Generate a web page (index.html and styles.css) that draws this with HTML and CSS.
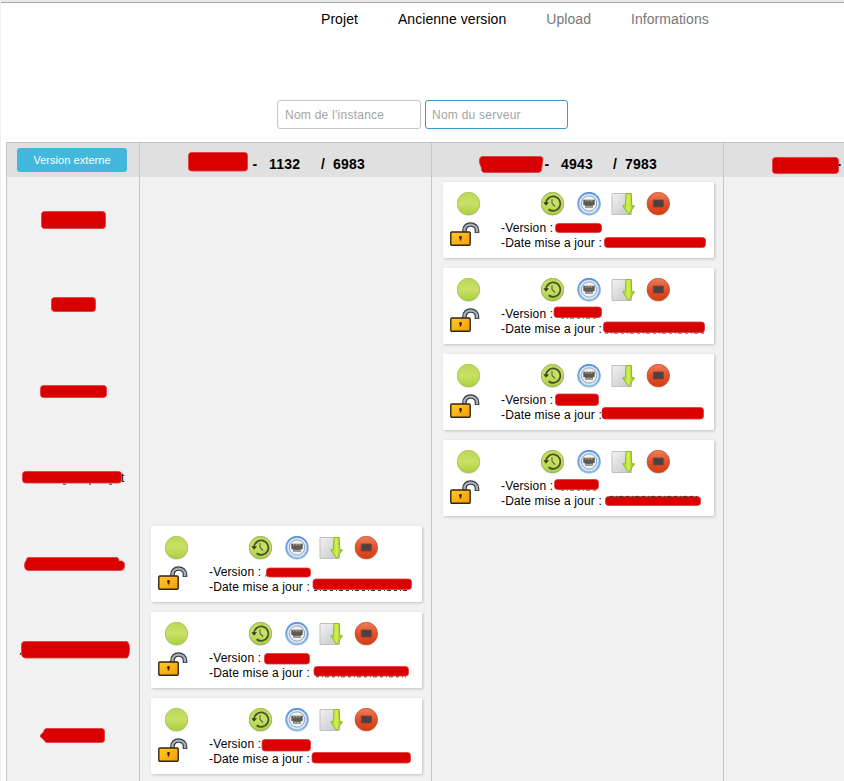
FILE: index.html
```html
<!DOCTYPE html>
<html lang="fr">
<head>
<meta charset="utf-8">
<title>Instances</title>
<link rel="stylesheet" href="styles.css">
</head>
<body>
<svg class="defs" width="0" height="0">
  <defs>
    <linearGradient id="green" x2="0" y2="1"><stop offset="0" stop-color="#b9d957"/><stop offset=".5" stop-color="#cae067"/><stop offset="1" stop-color="#a9d03c"/></linearGradient>
    <linearGradient id="red" x2="0" y2="1"><stop offset="0" stop-color="#ec805a"/><stop offset=".5" stop-color="#e0522c"/><stop offset="1" stop-color="#d53c12"/></linearGradient>
    <linearGradient id="blue" x2="0" y2="1"><stop offset="0" stop-color="#5c94dc"/><stop offset="1" stop-color="#86b9ef"/></linearGradient>
    <linearGradient id="paper" x2="1" y2="1"><stop offset="0" stop-color="#f2f2f2"/><stop offset="1" stop-color="#c5c5c5"/></linearGradient>
    <linearGradient id="arrow" x2="1" y2="0"><stop offset="0" stop-color="#a4d41b"/><stop offset=".5" stop-color="#d2f052"/><stop offset="1" stop-color="#87bd15"/></linearGradient>
    <linearGradient id="gold" x2="1" y2="1"><stop offset="0" stop-color="#ffcc25"/><stop offset="1" stop-color="#f79b05"/></linearGradient>
    <symbol id="status" viewBox="0 0 24 24">
      <ellipse cx="11.500" cy="12.800" rx="11.500" ry="11" fill="#d5d9cb"/>
      <circle cx="11.500" cy="11.500" r="11.200" fill="url(#green)" stroke="#a3c254" stroke-width=".8"/>
    </symbol>
    <symbol id="history" viewBox="0 0 24 24">
      <ellipse cx="11.500" cy="12.800" rx="11.500" ry="11" fill="#d5d9cb"/>
      <circle cx="11.500" cy="11.500" r="11.200" fill="url(#green)" stroke="#8fa858" stroke-width=".8"/>
      <path d="M5 11.200A7.200 7.200 0 1 1 7.600 17.200" fill="none" stroke="#46502a" stroke-width="1.800"/>
      <path d="M2.300 10.200h5.800l-3.100 3.600z" fill="#384021"/>
      <path d="M11 7.200v4.300l3 3" fill="none" stroke="#59663a" stroke-width="1.100"/>
    </symbol>
    <symbol id="network" viewBox="0 0 24 24">
      <ellipse cx="12" cy="12.800" rx="11.800" ry="11" fill="#d3d8df"/>
      <circle cx="12" cy="11.500" r="10.700" fill="#dceafa" stroke="url(#blue)" stroke-width="1.900"/>
      <circle cx="12" cy="11.500" r="7.700" fill="#eef0f2" stroke="#8f9ba9" stroke-width=".9"/>
      <path d="M6.300 7.700h11.400v5l-2 .8v2.300H8.300v-2.300l-2-.8z" fill="#5b5a54"/>
      <path d="M8 8.800h8" stroke="#b5a984" stroke-width="1.200" stroke-dasharray="1 .5"/>
      <path d="M8.500 13.800h7v2h-7z" fill="#a2a29c"/>
    </symbol>
    <symbol id="download" viewBox="0 0 24 24">
      <path d="M1 1.500h19.500v21H1z" fill="url(#paper)" stroke="#c0c0c0"/>
      <path d="M15 1.500h5l.9 12.200h2.600l-5.800 8.900-6-8.900h2.600z" fill="url(#arrow)" stroke="#83ad22" stroke-width=".8"/>
    </symbol>
    <symbol id="stop" viewBox="0 0 24 24">
      <ellipse cx="12.300" cy="12.800" rx="11.500" ry="11" fill="#ddd2cd"/>
      <circle cx="12.300" cy="11.500" r="11.200" fill="url(#red)" stroke="#ca4b2b" stroke-width=".8"/>
      <path d="M7.300 8h10v7h-10z" fill="#4b4142" stroke="#8c4030" stroke-width=".8"/>
    </symbol>
    <symbol id="unlock" viewBox="0 0 30 25">
      <path d="M14.500 11V8.500C14.500 4.400 17.300 2.500 20.500 2.500S27 4.700 27 8.500V11" fill="none" stroke="#343a40" stroke-width="4.600"/>
      <path d="M14.500 10.200V8.500C14.500 4.500 17.300 2.700 20.500 2.700S27 4.700 27 8.500V10.200" fill="none" stroke="#a9b0b8" stroke-width="2.300"/>
      <rect x=".8" y="10" width="19.400" height="13.300" rx="1" fill="url(#gold)" stroke="#30261a" stroke-width="1.400"/>
      <path d="M10.500 14.500v4" stroke="#3c2608" stroke-width="1.500"/><circle cx="10.500" cy="15.500" r="1.400" fill="#3c2608"/>
    </symbol>
  </defs>
</svg>

<nav class="nav">
  <a class="on">Projet</a><a class="on">Ancienne version</a><a>Upload</a><a>Informations</a>
</nav>

<form class="search">
  <input type="text" placeholder="Nom de l'instance">
  <input type="text" class="active" placeholder="Nom du serveur">
</form>

<main class="board">
  <div class="row head">
    <div class="cell label"><button type="button" class="btn">Version externe</button></div>
    <div class="cell server"><span class="dash">-</span><b class="port">1132</b><b class="sep">/</b><b>6983</b>
      <svg class="marks"><rect x="48.500" y="9.500" width="59" height="18.500" rx="3"/></svg></div>
    <div class="cell server"><span class="dash">-</span><b class="port">4943</b><b class="sep">/</b><b>7983</b>
      <svg class="marks"><path d="M50 13.500H108.500Q111 14 111 16L109.500 27Q109 29.500 106 29.500H52Q49 29 49.500 25L47.500 20V16Q48 14 50 13.500Z"/></svg></div>
    <div class="cell server"><span class="dash">-</span>
      <svg class="marks"><rect x="48.500" y="14.500" width="66" height="16" rx="3"/></svg></div>
  </div>

  <div class="row">
    <div class="cell label"><svg class="marks"><rect x="34.500" y="34.500" width="64" height="17" rx="3"/></svg></div>
    <div class="cell"></div>
    <div class="cell"><article class="card">
      <div class="tools"><svg class="state"><use href="#status"/></svg><svg><use href="#history"/></svg><svg class="net"><use href="#network"/></svg><svg><use href="#download"/></svg><svg><use href="#stop"/></svg></div>
      <div class="info"><svg class="lock"><use href="#unlock"/></svg><p>-Version :<br>-Date mise a jour :</p></div>
      <svg class="marks"><rect x="112.500" y="41.500" width="46" height="9" rx="3"/><rect x="161.500" y="55.500" width="101" height="10" rx="3"/></svg>
    </article></div>
    <div class="cell"></div>
  </div>

  <div class="row">
    <div class="cell label"><svg class="marks"><rect x="44.500" y="34.500" width="44" height="14" rx="3"/></svg></div>
    <div class="cell"></div>
    <div class="cell"><article class="card">
      <div class="tools"><svg class="state"><use href="#status"/></svg><svg><use href="#history"/></svg><svg class="net"><use href="#network"/></svg><svg><use href="#download"/></svg><svg><use href="#stop"/></svg></div>
      <div class="info"><svg class="lock"><use href="#unlock"/></svg><p>-Version :<br>-Date mise a jour :</p></div>
      <svg class="marks"><path class="ink" d="M118 50h38M162 65h99"/><rect x="111" y="39" width="47.500" height="10.500" rx="3"/><rect x="160.500" y="54" width="101" height="10.500" rx="3"/></svg>
    </article></div>
    <div class="cell"></div>
  </div>

  <div class="row">
    <div class="cell label"><svg class="marks"><rect x="33.500" y="36.500" width="66" height="12" rx="3"/></svg></div>
    <div class="cell"></div>
    <div class="cell"><article class="card">
      <div class="tools"><svg class="state"><use href="#status"/></svg><svg><use href="#history"/></svg><svg class="net"><use href="#network"/></svg><svg><use href="#download"/></svg><svg><use href="#stop"/></svg></div>
      <div class="info"><svg class="lock"><use href="#unlock"/></svg><p>-Version :<br>-Date mise a jour :</p></div>
      <svg class="marks"><rect x="112.500" y="40" width="43" height="11.500" rx="3"/><rect x="159" y="53.500" width="101.500" height="11.500" rx="3"/></svg>
    </article></div>
    <div class="cell"></div>
  </div>

  <div class="row">
    <div class="cell label name">t<svg class="marks"><path class="ink" d="M56 49.200h6M82 49.200h2M102 49.200h3"/><rect x="15.500" y="36.500" width="99" height="11.500" rx="3"/></svg></div>
    <div class="cell"></div>
    <div class="cell"><article class="card">
      <div class="tools"><svg class="state"><use href="#status"/></svg><svg><use href="#history"/></svg><svg class="net"><use href="#network"/></svg><svg><use href="#download"/></svg><svg><use href="#stop"/></svg></div>
      <div class="info"><svg class="lock"><use href="#unlock"/></svg><p>-Version :<br>-Date mise a jour :</p></div>
      <svg class="marks"><path class="ink" d="M118 50h38"/><rect x="111.500" y="39.500" width="44" height="10" rx="3"/><rect x="162.500" y="56.500" width="95" height="9" rx="3"/><path class="ink" d="M167 56.400h88"/></svg>
    </article></div>
    <div class="cell"></div>
  </div>

  <div class="row">
    <div class="cell label"><svg class="marks"><path d="M21 36.500H110Q112 37 112 40H115Q118 41 117.500 45Q117.500 49 114 49.500H21Q17.500 49 17.500 45Q17.500 41 19.500 39Q19.500 37 21 36.500Z"/></svg></div>
    <div class="cell"><article class="card">
      <div class="tools"><svg class="state"><use href="#status"/></svg><svg><use href="#history"/></svg><svg class="net"><use href="#network"/></svg><svg><use href="#download"/></svg><svg><use href="#stop"/></svg></div>
      <div class="info"><svg class="lock"><use href="#unlock"/></svg><p>-Version :<br>-Date mise a jour :</p></div>
      <svg class="marks"><path class="ink" d="M163 64.500h95"/><path class="ink" d="M114.500 50.500l2-5"/><rect x="115.500" y="42" width="44" height="9" rx="3"/><rect x="162" y="53" width="98.500" height="10.500" rx="3"/></svg>
    </article></div>
    <div class="cell"></div>
    <div class="cell"></div>
  </div>

  <div class="row">
    <div class="cell label"><svg class="marks"><path class="ink" d="M13 48l2-4"/><path d="M17 34.500H120Q122.500 36 122.500 42Q122.500 49 120 51H18Q14.500 50 14.500 47V38Q14.500 35 17 34.500Z"/></svg></div>
    <div class="cell"><article class="card">
      <div class="tools"><svg class="state"><use href="#status"/></svg><svg><use href="#history"/></svg><svg class="net"><use href="#network"/></svg><svg><use href="#download"/></svg><svg><use href="#stop"/></svg></div>
      <div class="info"><svg class="lock"><use href="#unlock"/></svg><p>-Version :<br>-Date mise a jour :</p></div>
      <svg class="marks"><path class="ink" d="M165 64.800h90"/><rect x="113.500" y="41.500" width="45" height="10.500" rx="3"/><rect x="163" y="54.500" width="94.500" height="9.500" rx="3"/></svg>
    </article></div>
    <div class="cell"></div>
    <div class="cell"></div>
  </div>

  <div class="row">
    <div class="cell label"><svg class="marks"><path d="M39 35.500H95Q97.500 36 97.500 38V47Q97.500 49 95 49.500H40Q37.500 49 37 47L33.500 44V42L36.500 39Q37 36 39 35.500Z"/></svg></div>
    <div class="cell"><article class="card">
      <div class="tools"><svg class="state"><use href="#status"/></svg><svg><use href="#history"/></svg><svg class="net"><use href="#network"/></svg><svg><use href="#download"/></svg><svg><use href="#stop"/></svg></div>
      <div class="info"><svg class="lock"><use href="#unlock"/></svg><p>-Version :<br>-Date mise a jour :</p></div>
      <svg class="marks"><rect x="111" y="41.500" width="48.500" height="11.500" rx="3"/><rect x="161" y="54.500" width="98.500" height="10.500" rx="3"/></svg>
    </article></div>
    <div class="cell"></div>
    <div class="cell"></div>
  </div>

  <div class="row"><div class="cell"></div><div class="cell"></div><div class="cell"></div><div class="cell"></div></div>
</main>
</body>
</html>
```
FILE: styles.css
```css
* { box-sizing: border-box; }

body {
  margin: 0;
  height: 781px;
  overflow: hidden;
  display: flex;
  flex-direction: column;
  border-top: 2px solid #e9e9e9;
  border-left: 1px solid #f0f0f0;
  background: #fff;
  color: #000;
  font: 12px/15px "Liberation Sans", Arial, sans-serif;
}

.defs { position: absolute; }

.nav {
  display: flex;
  flex: none;
  gap: 40px;
  height: 98px;
  padding: 7px 0 0 320px;
  border-top: 1px solid #a6a6a6;
  color: #777;
  font-size: 14px;
  line-height: 18px;
  letter-spacing: .06px;
}
.nav .on { color: #000; }

.search {
  display: flex;
  flex: none;
  gap: 4px;
  height: 42px;
  padding-left: 276px;
}
.search input {
  width: 144px;
  height: 29px;
  padding: 0 7px;
  border: 1px solid #c4c4c4;
  border-radius: 3px;
  background: #fff;
  font: 12px "Liberation Sans", Arial, sans-serif;
  letter-spacing: .25px;
}
.search .active { width: 143px; padding: 0 6px; border-color: #3a9bc9; }
.search input::placeholder { color: #a3a3a3; opacity: 1; }

.board {
  flex: 1;
  min-height: 0;
  overflow: hidden;
  margin-left: 5px;
  border-top: 1px solid #c5c5c5;
  background: #f1f1f1;
}

.row {
  display: grid;
  grid-template-columns: 133px 292px 292px 292px;
  height: 86px;
}
.cell {
  position: relative;
  padding: 5px 0 0 11px;
  border-left: 1px solid #c5c5c5;
}

.head { height: 34px; background: #e0e0e0; }
.head .label { padding: 5px 0 0 10px; }
.btn {
  display: block;
  width: 110px;
  height: 24px;
  padding: 0;
  border: 0;
  border-radius: 3px;
  background: #43b8dc;
  color: #fff;
  font: 11px/24px "Liberation Sans", Arial, sans-serif;
  letter-spacing: .05px;
}
.server {
  display: flex;
  padding: 12px 0 0 112.5px;
  font-size: 14px;
  line-height: 18px;
  letter-spacing: .2px;
}
.dash { width: 16.5px; font-weight: bold; }
.port { width: 52px; }
.sep { width: 12px; }
.name { padding: 36px 0 0 114px; line-height: 14px; }

.card {
  position: relative;
  width: 271px;
  height: 76px;
  padding-top: 10px;
  background: #fff;
  border-radius: 1px;
  box-shadow: 1px 1px 3px rgba(0, 0, 0, .2);
}
.tools { display: flex; gap: 11px; padding-left: 14px; }
.tools svg { width: 24px; height: 24px; flex: none; }
.tools .state { margin-right: 49px; }
.tools .net { margin: 0 -1px 0 1px; }
.info { display: flex; padding-left: 7px; }
.lock { width: 30px; height: 25px; margin-top: 6px; }
.info p { margin: 5px 0 0 21px; letter-spacing: .15px; white-space: nowrap; }

/* Masking strokes drawn over confidential values */
.marks {
  position: absolute;
  left: 0;
  top: 0;
  width: 100%;
  height: 100%;
  fill: #d80000;
  stroke: #e23a3a;
  stroke-width: .8;
}
.ink { fill: none; stroke: #333; stroke-width: 1; stroke-dasharray: 3 3 1 2 4 3; }
```
